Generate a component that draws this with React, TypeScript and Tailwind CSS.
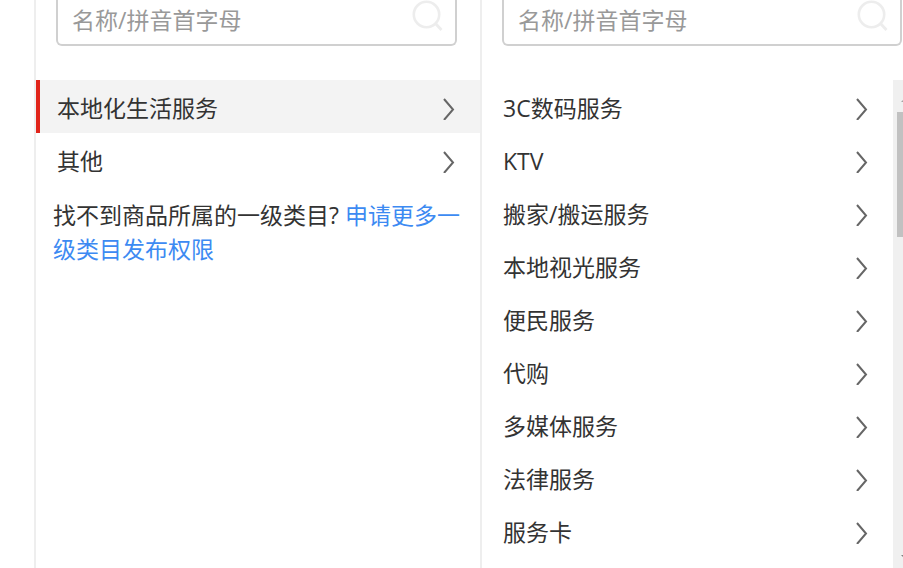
import { useState } from 'react'

const primaryCategories = ['本地化生活服务', '其他']

const secondaryCategories = [
  '3C数码服务',
  'KTV',
  '搬家/搬运服务',
  '本地视光服务',
  '便民服务',
  '代购',
  '多媒体服务',
  '法律服务',
  '服务卡',
]

function SearchIcon() {
  return (
    <svg className="pointer-events-none absolute right-3.5 top-0 size-8" viewBox="0 0 32 32" fill="none" aria-hidden="true">
      <circle cx="15.5" cy="14.5" r="12.7" stroke="#ededed" strokeWidth="2.6" />
      <path d="M24.5 23.5l6 6.5" stroke="#ededed" strokeWidth="2.8" />
    </svg>
  )
}

function ChevronIcon() {
  return (
    <svg className="h-6 w-3 shrink-0" viewBox="0 0 12 24" fill="none" aria-hidden="true">
      <path d="M1 3L10 13.5L1 24" stroke="#666" strokeWidth="2" />
    </svg>
  )
}

function SearchBox({ label, className }: { label: string; className: string }) {
  return (
    <div className={`relative h-[46px] ${className}`}>
      <input
        type="text"
        aria-label={label}
        placeholder="名称/拼音首字母"
        className="h-full w-full rounded-b-md border-2 border-t-0 border-[#d0d0d0] bg-white pb-1 pl-3.5 pr-12 text-[23px] text-[#333] outline-none placeholder:text-[#999]"
      />
      <SearchIcon />
    </div>
  )
}

function CategoryRow({ name, active, onSelect }: { name: string; active: boolean; onSelect: () => void }) {
  return (
    <li>
      <button
        type="button"
        aria-pressed={active}
        onClick={onSelect}
        className={`flex h-[53px] w-full items-center justify-between border-l-4 pl-[17px] pr-[25px] pt-0.5 text-left ${
          active ? 'border-[#e1251b] bg-[#f3f3f3]' : 'border-transparent'
        }`}
      >
        <span>{name}</span>
        <ChevronIcon />
      </button>
    </li>
  )
}

function ScrollTrack() {
  return (
    <div className="flex w-2.5 shrink-0 flex-col justify-between overflow-hidden bg-[#f0f0f0] pl-1" aria-hidden="true">
      <div>
        <svg className="ml-1 h-8 w-4" viewBox="0 0 16 32">
          <path d="M0 22L7 15L14 22Z" fill="#a3a3a3" />
        </svg>
        <div className="h-[125px] bg-[#c1c1c1]" />
      </div>
      <svg className="ml-1 h-4 w-4" viewBox="0 0 16 16">
        <path d="M0 3L7 10L14 3Z" fill="#808080" />
      </svg>
    </div>
  )
}

function App() {
  const [primary, setPrimary] = useState(primaryCategories[0])
  const [secondary, setSecondary] = useState('')

  return (
    <main className="grid min-h-screen grid-cols-[446fr_423fr] bg-white pl-[34px] font-['Open_Sans','Noto_Sans_CJK_SC',sans-serif] text-[23px] leading-[34px] text-[#333]">
      <section className="border-l-2 border-[#eee]">
        <SearchBox label="搜索一级类目" className="ml-5 mr-[23px]" />
        <ul className="mt-[34px]">
          {primaryCategories.map((name) => (
            <CategoryRow key={name} name={name} active={name === primary} onSelect={() => setPrimary(name)} />
          ))}
        </ul>
        <p className="mt-3 pl-[17px]">
          找不到商品所属的一级类目?{' '}
          <a href="#apply" className="text-[#3d8af2]">
            申请更多一级类目发布权限
          </a>
        </p>
      </section>

      <section className="flex flex-col border-l-2 border-[#eee]">
        <SearchBox label="搜索二级类目" className="ml-5 mr-px" />
        <div className="mt-[34px] flex grow">
          <ul className="grow">
            {secondaryCategories.map((name) => (
              <CategoryRow key={name} name={name} active={name === secondary} onSelect={() => setSecondary(name)} />
            ))}
          </ul>
          <ScrollTrack />
        </div>
      </section>
    </main>
  )
}

export default App
